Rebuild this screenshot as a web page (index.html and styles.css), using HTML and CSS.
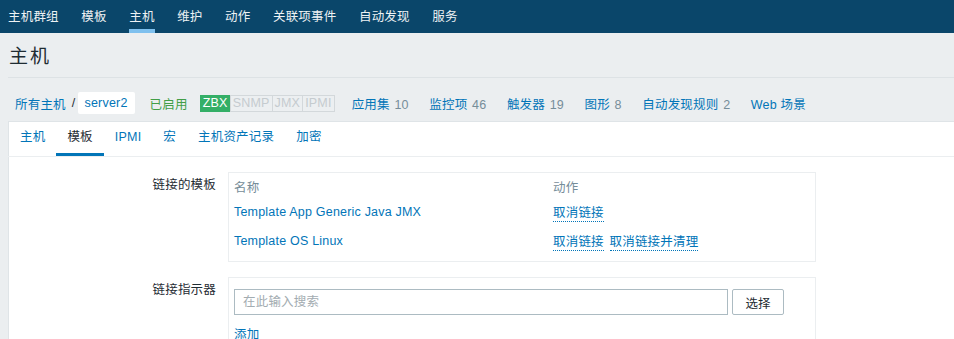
FILE: index.html
```html
<!DOCTYPE html>
<html lang="zh-CN">
<head>
    <meta charset="UTF-8">
    <meta name="viewport" content="width=device-width, initial-scale=1.0">
    <title>主机</title>
    <link rel="stylesheet" href="styles.css">
</head>
<body>
  <nav class="top-nav">
    <ul>
      <li><a href="#">主机群组</a></li>
      <li><a href="#">模板</a></li>
      <li class="selected"><a href="#">主机</a></li>
      <li><a href="#">维护</a></li>
      <li><a href="#">动作</a></li>
      <li><a href="#">关联项事件</a></li>
      <li><a href="#">自动发现</a></li>
      <li><a href="#">服务</a></li>
    </ul>
  </nav>

  <div class="wrapper">
    <div class="header-title">
      <h1>主机</h1>
    </div>

    <ul class="object-bar">
      <li class="crumbs">
        <a href="#">所有主机</a>
        <span class="divider">/</span>
        <span class="current"><a href="#">server2</a></span>
      </li>
      <li><span class="green">已启用</span></li>
      <li class="status-container">
        <span class="status-green">ZBX</span><span class="status-grey">SNMP</span><span class="status-grey">JMX</span><span class="status-grey">IPMI</span>
      </li>
      <li><a href="#">应用集</a> <sup>10</sup></li>
      <li><a href="#">监控项</a> <sup>46</sup></li>
      <li><a href="#">触发器</a> <sup>19</sup></li>
      <li><a href="#">图形</a> <sup>8</sup></li>
      <li><a href="#">自动发现规则</a> <sup>2</sup></li>
      <li><a href="#">Web 场景</a></li>
    </ul>

    <div class="table-forms-container">
      <ul class="tabs-nav">
        <li><a href="#">主机</a></li>
        <li class="active"><a href="#">模板</a></li>
        <li><a href="#">IPMI</a></li>
        <li><a href="#">宏</a></li>
        <li><a href="#">主机资产记录</a></li>
        <li><a href="#">加密</a></li>
      </ul>

      <div class="form-list">
        <div class="form-row">
          <label class="form-label">链接的模板</label>
          <div class="form-field table-box">
            <table class="linked-table">
              <thead>
                <tr>
                  <th class="col-name">名称</th>
                  <th>动作</th>
                </tr>
              </thead>
              <tbody>
                <tr>
                  <td><a href="#">Template App Generic Java JMX</a></td>
                  <td><a href="#" class="link-action">取消链接</a></td>
                </tr>
                <tr>
                  <td><a href="#">Template OS Linux</a></td>
                  <td><a href="#" class="link-action">取消链接</a> <a href="#" class="link-action">取消链接并清理</a></td>
                </tr>
              </tbody>
            </table>
          </div>
        </div>

        <div class="form-row">
          <label class="form-label">链接指示器</label>
          <div class="form-field link-box">
            <div class="search-line">
              <input type="text" class="search-input" placeholder="在此输入搜索">
              <button class="btn-grey">选择</button>
            </div>
            <a href="#" class="add-link">添加</a>
          </div>
        </div>
      </div>
    </div>
  </div>
</body>
</html>
```

FILE: styles.css
```css
body {
  font-family: 'Liberation Sans', 'Noto Sans CJK SC', sans-serif;
  font-size: 12.5px;
  letter-spacing: 0.2px;
  color: #1f2c33;
  background-color: #ebeef0;
  margin: 0;
  overflow: hidden;
}
a {
  color: #0275b8;
  text-decoration: none;
}
ul {
  list-style: none;
  margin: 0;
  padding: 0;
}

/* top menu */
.top-nav {
  background-color: #0a466a;
  height: 33px;
}
.top-nav ul {
  display: flex;
  gap: 22.5px;
  padding-left: 8px;
  height: 33px;
}
.top-nav li {
  height: 33px;
  box-sizing: border-box;
  border-bottom: 4px solid transparent;
  display: flex;
  align-items: center;
  padding-top: 2px;
}
.top-nav li a {
  color: #eef2f4;
}
.top-nav li.selected {
  border-bottom: 4px solid #7ec0ee;
}

.wrapper {
  padding-left: 8px;
}

.header-title {
  height: 45px;
  border-bottom: 1px solid #dde2e5;
  box-sizing: border-box;
  padding-top: 12px;
}
.header-title h1 {
  margin: 0 0 0 1px;
  font-size: 19px;
  font-weight: normal;
  line-height: 24px;
  letter-spacing: 2px;
  color: #1f2c33;
}

/* host bar */
.object-bar {
  display: flex;
  align-items: center;
  gap: 20.5px;
  padding-left: 7px;
  margin-top: 14px;
  margin-bottom: 7px;
  height: 22px;
}
.object-bar li {
  white-space: nowrap;
}
.object-bar sup {
  vertical-align: baseline;
  font-size: 12.5px;
  color: #768d99;
  margin-left: 1px;
}
.crumbs {
  display: flex;
  align-items: center;
  margin-right: -5.5px;
}
.crumbs .divider {
  margin: 0 2px 0 6px;
}
.crumbs .current {
  background-color: #fff;
  height: 22px;
  line-height: 22px;
  padding: 0 7px;
  border-radius: 2px;
}
.green {
  color: #429e47;
}
.status-container {
  display: flex;
  margin-left: -8.5px;
  margin-right: -3.5px;
}
.status-container span {
  line-height: 15px;
  padding: 0 2px;
  border: 1px solid #d3d8db;
  margin-left: -1px;
}
.status-green {
  background-color: #34af67;
  border-color: #34af67 !important;
  color: #fff;
  margin-left: 0 !important;
}
.status-grey {
  color: #c5cbcf;
  background-color: #eceff1;
}

/* white container */
.table-forms-container {
  background-color: #fff;
  border: 1px solid #dfe4e7;
  border-right: none;
  height: 400px;
}
.tabs-nav {
  display: flex;
  border-bottom: 1px solid #ebeef0;
  margin-left: -1px;
}
.tabs-nav li {
  padding: 0 11px;
  line-height: 31px;
  border-bottom: 3px solid transparent;
}
.tabs-nav li:first-child {
  padding-left: 12px;
}
.tabs-nav li.active {
  border-bottom-color: #0275b8;
}
.tabs-nav li.active a {
  color: #1f2c33;
}

.form-list {
  padding-top: 15px;
}
.form-row {
  display: flex;
  margin-bottom: 15px;
}
.form-label {
  width: 207px;
  text-align: right;
  padding-right: 12px;
  line-height: 26px;
  flex-shrink: 0;
}
.form-field {
  width: 588px;
  box-sizing: border-box;
  border: 1px solid #ebeef0;
}

.table-box {
  padding: 5px 5px 6px 5px;
}
.linked-table {
  border-collapse: collapse;
  width: 100%;
}
.linked-table th {
  text-align: left;
  font-weight: normal;
  color: #768d99;
  height: 19px;
  padding: 0;
  line-height: 18px;
}
.linked-table .col-name {
  width: 319px;
}
.linked-table td {
  height: 29px;
  padding: 0;
}
.link-action {
  border-bottom: 1px dotted #0275b8;
  padding-bottom: 1px;
}
.link-action + .link-action {
  margin-left: 2px;
}

.link-box {
  padding: 11px 5px 0 5px;
  height: 80px;
}
.search-line {
  display: flex;
  gap: 4px;
}
.search-input {
  width: 494px;
  height: 26px;
  box-sizing: border-box;
  border: 1px solid #acbbc2;
  padding: 0 8px;
  font-family: inherit;
  font-size: 12.5px;
  letter-spacing: 0.2px;
  margin: 0;
  color: #1f2c33;
}
.search-input::placeholder {
  color: #a3acb1;
}
.btn-grey {
  width: 52px;
  height: 26px;
  background-color: #fff;
  border: 1px solid #acbbc2;
  border-radius: 2px;
  font-family: inherit;
  font-size: 12.5px;
  color: #1f2c33;
  padding: 0;
}
.add-link {
  display: inline-block;
  margin-top: 11px;
  line-height: 18px;
}
```
